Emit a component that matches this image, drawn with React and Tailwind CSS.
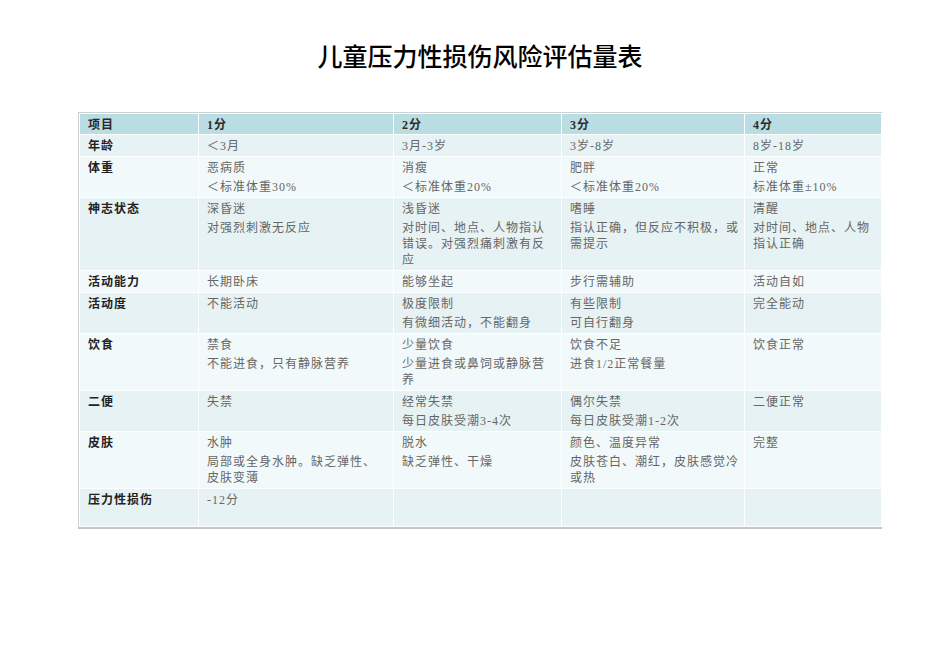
const FONT = { fontFamily: '"Liberation Serif", "Noto Sans CJK SC", serif' };

const HEAD = ['项目', '1分', '2分', '3分', '4分'];
const WIDTHS = ['w-[119px]', 'w-[195px]', 'w-[168px]', 'w-[183px]', 'w-[137px]'];

const ROWS = [
  { label: '年龄', cells: [['＜3月'], ['3月-3岁'], ['3岁-8岁'], ['8岁-18岁']] },
  { label: '体重', cells: [['恶病质', '＜标准体重30%'], ['消瘦', '＜标准体重20%'], ['肥胖', '＜标准体重20%'], ['正常', '标准体重±10%']] },
  {
    label: '神志状态',
    cells: [
      ['深昏迷', '对强烈刺激无反应'],
      ['浅昏迷', '对时间、地点、人物指认错误。对强烈痛刺激有反应'],
      ['嗜睡', '指认正确，但反应不积极，或需提示'],
      ['清醒', '对时间、地点、人物指认正确'],
    ],
  },
  { label: '活动能力', cells: [['长期卧床'], ['能够坐起'], ['步行需辅助'], ['活动自如']] },
  { label: '活动度', cells: [['不能活动'], ['极度限制', '有微细活动，不能翻身'], ['有些限制', '可自行翻身'], ['完全能动']] },
  {
    label: '饮食',
    cells: [
      ['禁食', '不能进食，只有静脉营养'],
      ['少量饮食', '少量进食或鼻饲或静脉营养'],
      ['饮食不足', '进食1/2正常餐量'],
      ['饮食正常'],
    ],
  },
  { label: '二便', cells: [['失禁'], ['经常失禁', '每日皮肤受潮3-4次'], ['偶尔失禁', '每日皮肤受潮1-2次'], ['二便正常']] },
  {
    label: '皮肤',
    cells: [
      ['水肿', '局部或全身水肿。缺乏弹性、皮肤变薄'],
      ['脱水', '缺乏弹性、干燥'],
      ['颜色、温度异常', '皮肤苍白、潮红，皮肤感觉冷或热'],
      ['完整'],
    ],
  },
  { label: '压力性损伤', cells: [['-12分'], [], [], []], tall: true },
];

function Cell({ lines, className = '' }) {
  return (
    <td className={`align-top border border-white pl-[8px] pt-[3px] pb-[2px] ${className}`}>
      {lines.map((t, i) => (
        <div key={i} className={`leading-4 ${i > 0 ? 'mt-[3px]' : ''}`}>{t}</div>
      ))}
    </td>
  );
}

export default function App() {
  return (
    <div className="min-h-[672px] w-[950px] bg-white" style={FONT}>
      <div className="ml-[78px] w-[804px] pt-[41px]">
        <h1
          className="text-center text-[25px] leading-[29px] font-medium text-black"
          style={{ fontFamily: '"Noto Sans CJK SC", sans-serif' }}
        >
          儿童压力性损伤风险评估量表
        </h1>

        <div className="mt-[42px] border border-[#cfd2d2] border-r-2 border-b-2 border-r-[#c4c6c6] border-b-[#c4c6c6]">
          <table className="table-fixed border-collapse w-full text-[12px] tracking-[1px]">
            <colgroup>
              {WIDTHS.map((w, i) => <col key={i} className={w} />)}
            </colgroup>
            <thead>
              <tr className="bg-[#b9dde2] text-[#2b2b2b] font-bold">
                {HEAD.map((h, i) => (
                  <th key={i} className="text-left align-top border border-white px-[8px] pt-[3px] pb-[1px] leading-4 font-bold">
                    {h}
                  </th>
                ))}
              </tr>
            </thead>
            <tbody>
              {ROWS.map((row, r) => (
                <tr
                  key={row.label}
                  className={`${r % 2 === 0 ? 'bg-[#e6f2f3]' : 'bg-[#f2f9fa]'} ${row.tall ? 'h-[38px]' : ''}`}
                >
                  <Cell lines={[row.label]} className="font-bold text-[#222] pr-[8px]" />
                  {row.cells.map((lines, i) => (
                    <Cell key={i} lines={lines} className={`text-[#666] ${i === 2 ? 'pr-[2px]' : 'pr-[8px]'}`} />
                  ))}
                </tr>
              ))}
            </tbody>
          </table>
        </div>
      </div>
    </div>
  );
}
